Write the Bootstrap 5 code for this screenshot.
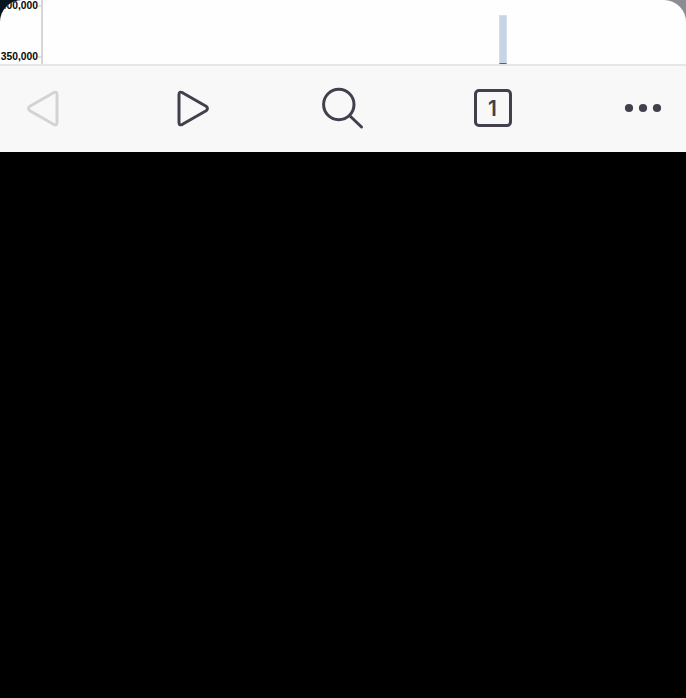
<!DOCTYPE html>
<html lang="en">
<head>
<meta charset="utf-8">
<meta name="viewport" content="width=device-width, initial-scale=1">
<title>Browser</title>
<link href="https://cdn.jsdelivr.net/npm/bootstrap@5.3.0/dist/css/bootstrap.min.css" rel="stylesheet">
<style>
body{background:#000;font-family:"Liberation Sans",Arial,sans-serif}
.browser-sheet{height:152px;background:linear-gradient(90deg,#07131d 50%,#8c8c94 50%)}
.page-view{height:64px;background:#fefefe;border-radius:22px 22px 0 0}
.axis-labels{width:38px;font-size:10.3px;font-weight:700;line-height:12px;color:#080808;padding-bottom:1px}
.axis-ticks{width:5px;border-right:2px solid #d6d6d6;padding:5px 0 6px}
.tick-line{width:3px;height:2px;background:#e0e0e0}
.chart-bar{width:8px;height:49px;margin-left:456px;background:#c7d4e6;border:1px solid #d5dfeb;border-bottom:1px solid #496580}
.toolbar{height:88px;background:#f8f8f9;border-top:2px solid #e6e6e7;padding:0 21px 2px}
.tool{width:44px;height:44px;color:#42404d}
.tool-off,.tool-off:disabled{color:#d3d3d4;opacity:1}
.tool svg{display:block;fill:none;stroke:currentColor;stroke-width:3;stroke-linecap:round;stroke-linejoin:round}
.tab-count{width:38px;height:38px;border:3px solid #42404d;border-radius:5px;font:600 21px/33px Inter,sans-serif;padding-right:1px}
</style>
<script src="https://cdn.jsdelivr.net/npm/bootstrap@5.3.0/dist/js/bootstrap.bundle.min.js"></script>
</head>
<body class="overflow-hidden">
<div class="browser-sheet">
  <main class="page-view d-flex overflow-hidden">
    <div class="axis-labels d-flex flex-column justify-content-between text-end"><span>400,000</span><span>350,000</span></div>
    <div class="axis-ticks d-flex flex-column justify-content-between"><span class="tick-line"></span><span class="tick-line"></span></div>
    <div class="chart-bar align-self-end"></div>
  </main>
  <nav class="toolbar d-flex align-items-center justify-content-between" aria-label="Browser toolbar">
    <button class="tool tool-off btn p-0 border-0" disabled aria-label="Back"><svg width="44" height="44"><path d="M32.5 6.7Q36 4.9 36 8.8V36.2Q36 40.1 32.5 38.3L8.9 24.8Q6.2 22.5 8.9 20.2Z"/></svg></button>
    <button class="tool btn p-0 border-0" aria-label="Forward"><svg width="44" height="44"><path d="M11.5 6.7Q8 4.9 8 8.8V36.2Q8 40.1 11.5 38.3L35.1 24.8Q37.8 22.5 35.1 20.2Z"/></svg></button>
    <button class="tool btn p-0 border-0" aria-label="Search"><svg width="44" height="44"><circle cx="17.8" cy="18.5" r="15.2"/><path d="M29 30L40.5 41"/></svg></button>
    <button class="tool btn p-0 border-0 d-flex align-items-center justify-content-center" aria-label="Tabs"><span class="tab-count text-center">1</span></button>
    <button class="tool btn p-0 border-0" aria-label="More"><svg width="44" height="44"><g fill="currentColor" stroke="none"><circle cx="8" cy="22" r="4.1"/><circle cx="22" cy="22" r="4.1"/><circle cx="36" cy="22" r="4.1"/></g></svg></button>
  </nav>
</div>
</body>
</html>
